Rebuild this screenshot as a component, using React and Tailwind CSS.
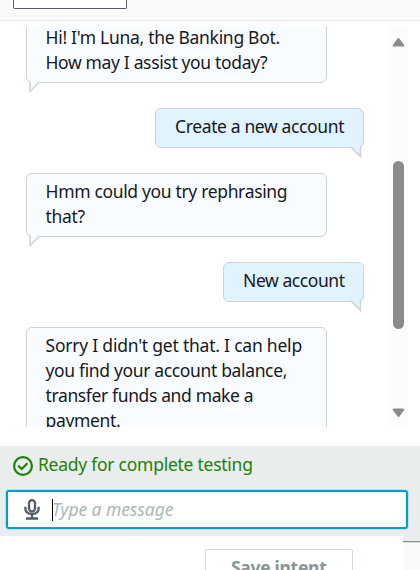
import React from "react";

function Bubble({ side, className, children }) {
  const bot = side === "left";
  return (
    <div
      className={`relative shrink-0 whitespace-nowrap rounded-[6px] border border-[#d0d3d4] pt-[5px] text-[17.5px] leading-[25px] text-[#16191f] ${
        bot ? "self-start bg-[#f8fcff] pl-[18.5px]" : "self-end bg-[#e1f3ff] pl-[19px]"
      } ${className}`}
    >
      {children}
      {bot ? (
        <svg className="absolute -bottom-[11px] left-[2px]" width="12" height="13" viewBox="0 0 12 13">
          <path d="M1 0V11.5L10.5 2V0Z" fill="#f8fcff" />
          <path d="M1 1V11.5L10.5 2" fill="none" stroke="#d0d3d4" strokeWidth="1.5" />
        </svg>
      ) : (
        <svg className="absolute -bottom-[11px] right-[1px]" width="12" height="13" viewBox="0 0 12 13">
          <path d="M1 0V2L10.5 11.5V0Z" fill="#e1f3ff" />
          <path d="M1 2L10.5 11.5V1" fill="none" stroke="#d0d3d4" strokeWidth="1.5" />
        </svg>
      )}
    </div>
  );
}

export default function App() {
  return (
    <div className="flex h-[570px] w-[420px] flex-col overflow-hidden bg-white font-['Noto_Sans',sans-serif]">
      <header className="h-[21px] shrink-0 border-b border-[#e4e9e9] bg-[#fafafa] pl-[13px]">
        <div className="h-[9px] w-[114px] rounded-b-[2px] border border-t-0 border-[#545b64] bg-white" />
      </header>

      <main className="mt-[6px] flex h-[400px] shrink-0 overflow-hidden">
        <div className="flex h-[400px] w-[364px] shrink-0 flex-col gap-[25px] overflow-hidden pl-[26px]">
          <Bubble side="left" className="-mt-[8px] h-[64px] w-[301px]">
            <div className="tracking-[-0.3px]">Hi! I'm Luna, the Banking Bot.</div>
            <div className="tracking-[-0.35px]">How may I assist you today?</div>
          </Bubble>
          <Bubble side="right" className="h-[40px] w-[209px]">
            <div className="tracking-[-0.37px]">Create a new account</div>
          </Bubble>
          <Bubble side="left" className="h-[64px] w-[301px]">
            <div className="tracking-[-0.34px]">Hmm could you try rephrasing</div>
            <div className="tracking-[-0.3px]">that?</div>
          </Bubble>
          <Bubble side="right" className="h-[40px] w-[141px]">
            <div className="tracking-[-0.42px]">New account</div>
          </Bubble>
          <Bubble side="left" className="h-[114px] w-[301px]">
            <div className="tracking-[-0.22px]">Sorry I didn't get that. I can help</div>
            <div className="tracking-[-0.35px]">you find your account balance,</div>
            <div className="tracking-[-0.37px]">transfer funds and make a</div>
            <div className="tracking-[-0.35px]">payment.</div>
          </Bubble>
        </div>
        <div className="ml-[25px] flex w-[19px] flex-col items-center bg-[#fcfcfc] pt-[10px]">
          <svg width="13" height="10" viewBox="0 0 13 10">
            <path d="M6.5 1L12 8.5Q12 9 11.5 9H1.5Q1 9 1 8.5Z" fill="#8b8b8b" stroke="#8b8b8b" strokeLinejoin="round" />
          </svg>
          <div className="mt-[114px] h-[168px] w-[11px] rounded-full bg-[#8b8b8b]" />
          <svg className="mt-[79px]" width="13" height="10" viewBox="0 0 13 10">
            <path d="M6.5 9L12 1.5Q12 1 11.5 1H1.5Q1 1 1 1.5Z" fill="#8b8b8b" stroke="#8b8b8b" strokeLinejoin="round" />
          </svg>
        </div>
      </main>

      <section className="mt-[19px] h-[90px] shrink-0 bg-[#e9eded]">
        <div className="flex h-[44px] items-center pl-[13px] text-[#1d8102]">
          <svg className="-mt-[4px]" width="20" height="20" viewBox="0 0 20 20" fill="none" stroke="currentColor" strokeWidth="2.2">
            <circle cx="10" cy="10" r="8.9" />
            <path d="M5.2 9.6L8.7 13L14.4 7.2" />
          </svg>
          <span className="-mt-[7px] ml-[5px] whitespace-nowrap text-[17.5px] leading-[25px] tracking-[-0.26px]">
            Ready for complete testing
          </span>
        </div>
        <div className="ml-[6px] flex h-[39px] w-[402px] items-center rounded-[3px] border-2 border-[#00a1c9] bg-white pl-[16px] shadow-[0_0_0_1px_#bfe0e8]">
          <svg width="16" height="21" viewBox="0 0 16 21" fill="none" stroke="#545b64" strokeWidth="2.3">
            <rect x="5" y="1.2" width="6" height="11.3" rx="3" />
            <path d="M1.4 7.8V10A6.6 5.2 0 0 0 14.6 10V7.8M8 15.2V19.5M2 19.5H14" />
          </svg>
          <div className="ml-[12px] h-[22px] w-px bg-black" />
          <span className="-ml-px -mt-px whitespace-nowrap text-[17.5px] italic leading-[25px] tracking-[-0.08px] text-[#aab7b8]">
            Type a message
          </span>
        </div>
      </section>

      <footer className="flex h-[34px] shrink-0">
        <div className="w-[403px] pl-[205px] pt-[13px]">
          <div className="h-[40px] w-[148px] rounded-[2px] border border-[#d5dbdb] pl-[25px] pt-[5px] text-[17.5px] font-bold leading-[25px] tracking-[-0.3px] whitespace-nowrap text-[#879596]">
            Save intent
          </div>
        </div>
        <div className="w-[17px] border-t-[5px] border-[#e9eded] bg-[#fafafa]">
          <div className="h-[2px] border-t border-[#879596] bg-[#d5dbdb]" />
        </div>
      </footer>
    </div>
  );
}
